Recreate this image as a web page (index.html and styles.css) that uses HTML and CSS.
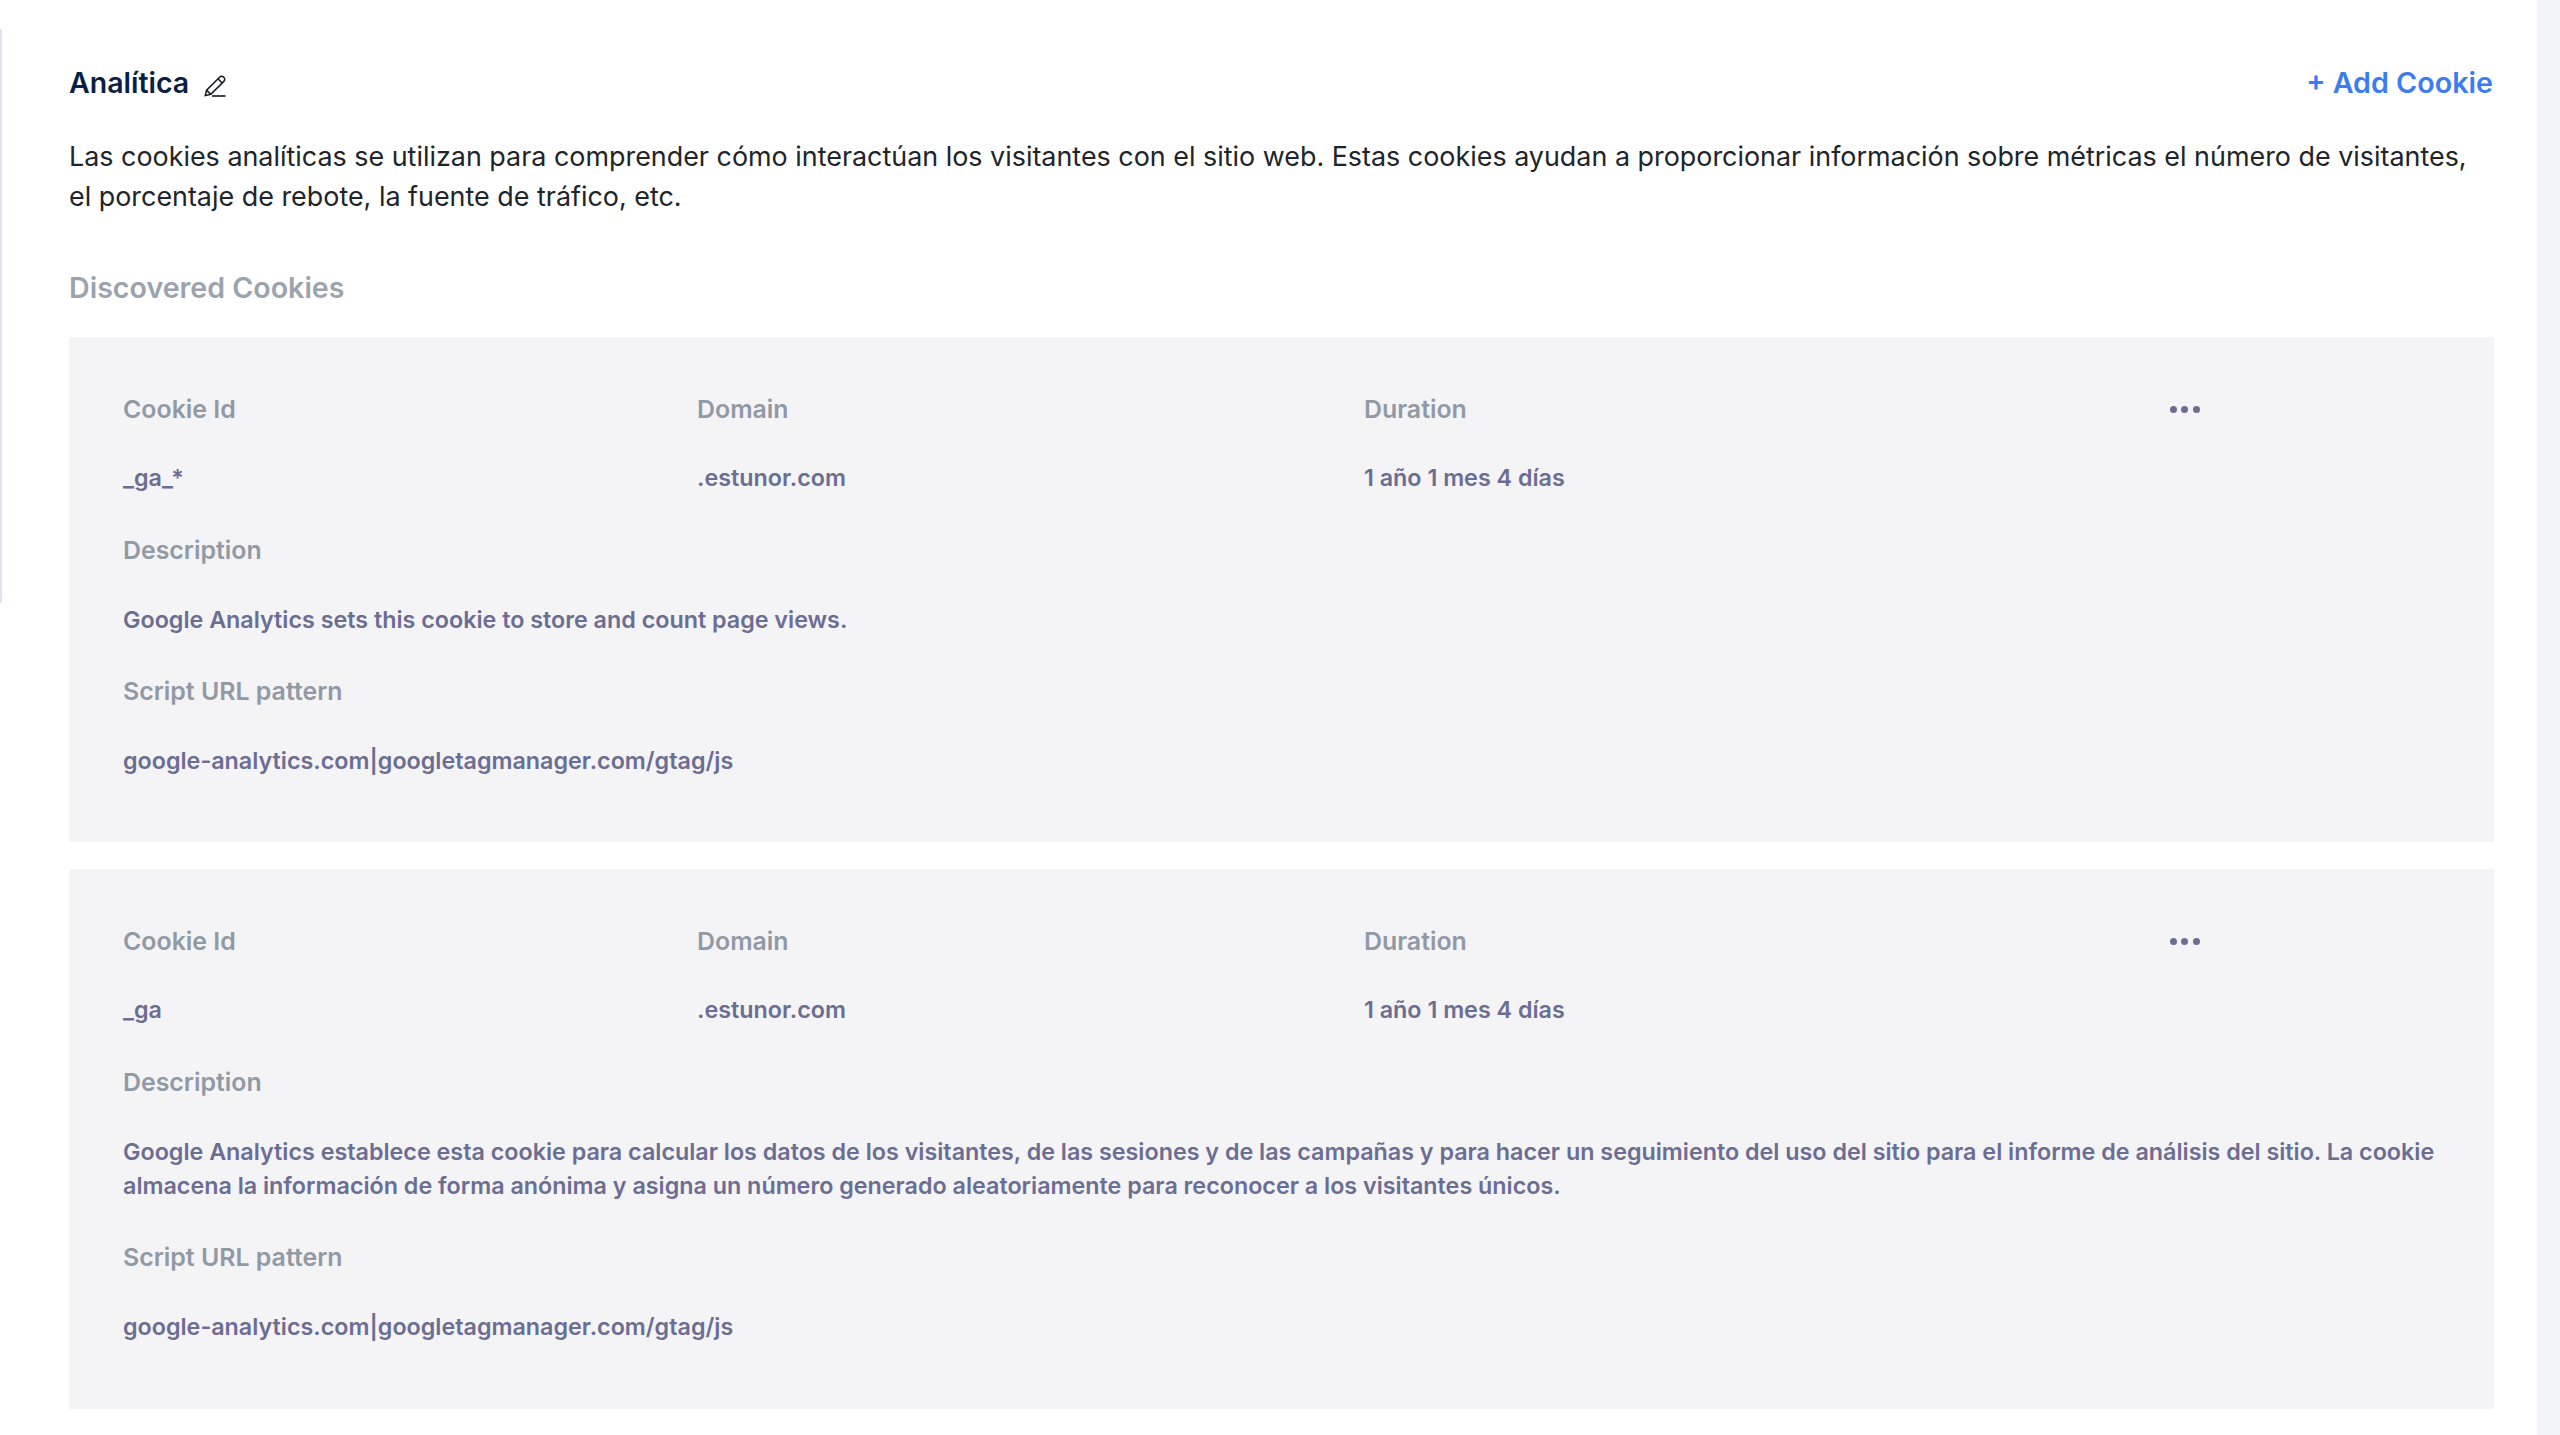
FILE: index.html
```html
<!DOCTYPE html>
<html lang="es">
<head>
<meta charset="utf-8">
<title>Analítica</title>
<link rel="stylesheet" href="styles.css">
</head>
<body>
<div class="rail"></div>
<main class="panel">
  <header class="head">
    <div class="title-wrap">
      <h1 class="title">Analítica</h1>
      <svg class="pencil" viewBox="0 0 22 22" width="22" height="22" fill="none" stroke="#14171f" stroke-width="1.5">
        <path d="M1.2 20.6 L2.6 15.2 L15.6 2.2 C16.8 1 18.6 1 19.8 2.2 C21 3.4 21 5.2 19.8 6.4 L6.8 19.4 Z"/>
        <path d="M14 3.8 L18.2 8"/>
        <path d="M2.6 15.2 L6.8 19.4"/>
        <path d="M8 21 H21.6" stroke-width="1.6"/>
      </svg>
    </div>
    <a class="add">+ Add Cookie</a>
  </header>
  <p class="intro">Las cookies analíticas se utilizan para comprender cómo interactúan los visitantes con el sitio web. Estas cookies ayudan a proporcionar información sobre métricas el número de visitantes, el porcentaje de rebote, la fuente de tráfico, etc.</p>
  <h2 class="sub">Discovered Cookies</h2>

  <section class="card">
    <div class="grid">
      <div class="label">Cookie Id</div>
      <div class="label">Domain</div>
      <div class="label">Duration</div>
      <div class="dots"><i></i><i></i><i></i></div>
      <div class="value">_ga_*</div>
      <div class="value">.estunor.com</div>
      <div class="value">1 año 1 mes 4 días</div>
    </div>
    <div class="label">Description</div>
    <div class="value">Google Analytics sets this cookie to store and count page views.</div>
    <div class="label">Script URL pattern</div>
    <div class="value">google-analytics.com|googletagmanager.com/gtag/js</div>
  </section>

  <section class="card">
    <div class="grid">
      <div class="label">Cookie Id</div>
      <div class="label">Domain</div>
      <div class="label">Duration</div>
      <div class="dots"><i></i><i></i><i></i></div>
      <div class="value">_ga</div>
      <div class="value">.estunor.com</div>
      <div class="value">1 año 1 mes 4 días</div>
    </div>
    <div class="label">Description</div>
    <div class="value">Google Analytics establece esta cookie para calcular los datos de los visitantes, de las sesiones y de las campañas y para hacer un seguimiento del uso del sitio para el informe de análisis del sitio. La cookie almacena la información de forma anónima y asigna un número generado aleatoriamente para reconocer a los visitantes únicos.</div>
    <div class="label">Script URL pattern</div>
    <div class="value">google-analytics.com|googletagmanager.com/gtag/js</div>
  </section>
</main>
<div class="side"></div>
</body>
</html>
```
FILE: styles.css
```css
* { box-sizing: border-box; }
html, body { margin: 0; height: 100%; }
body {
  display: flex;
  height: 1435px;
  overflow: hidden;
  background: #fff;
  font-family: Inter, "Liberation Sans", sans-serif;
}
.rail {
  flex: none;
  width: 2px;
  height: 574px;
  margin-top: 29px;
  background: #e0e2f2;
}
.panel {
  flex: 1;
  min-width: 0;
  padding: 63px 43px 0 67px;
}
.side {
  flex: none;
  width: 23px;
  background: #f3f4f9;
}
.head {
  display: flex;
  justify-content: space-between;
  align-items: center;
  height: 40px;
}
.title-wrap { display: flex; align-items: center; gap: 15px; }
.title {
  margin: 0;
  font-size: 28.5px;
  line-height: 40px;
  font-weight: 600;
  color: #0a1f44;
}
.pencil { margin-top: 5px; }
.add {
  margin-right: 1px;
  font-size: 28.7px;
  line-height: 40px;
  font-weight: 600;
  color: #3b7cf0;
}
.intro {
  margin: 32.5px 0 0;
  font-size: 26.9px;
  line-height: 40px;
  font-weight: 400;
  color: #212529;
}
.sub {
  margin: 52.5px 0 0;
  font-size: 28.6px;
  line-height: 40px;
  font-weight: 600;
  color: #9aa3ae;
}
.card {
  margin-top: 29px;
  padding: 54.5px 53px 64px 54px;
  background: #f4f4f7;
}
.card + .card { margin-top: 27px; }
.grid {
  display: grid;
  grid-template-columns: 574px 667px 806px 1fr;
  row-gap: 34.6px;
  margin-bottom: 37px;
}
.label { line-height: 35.2px; }
.value { line-height: 34.4px; }
.label {
  font-size: 24.9px;
  font-weight: 600;
  color: #9199a5;
}
.value {
  font-size: 23.3px;
  font-weight: 600;
  color: #6c6d93;
  margin-bottom: 37px;
}
.card > .value:last-child { margin-bottom: 0; }
.grid .value { margin-bottom: 0; }
.card > .label { margin-bottom: 34.6px; }
.dots {
  display: flex;
  gap: 4.3px;
  align-items: center;
  height: 35.2px;
}
.dots i {
  width: 7px;
  height: 7px;
  border-radius: 50%;
  background: #6c6d93;
}
```
